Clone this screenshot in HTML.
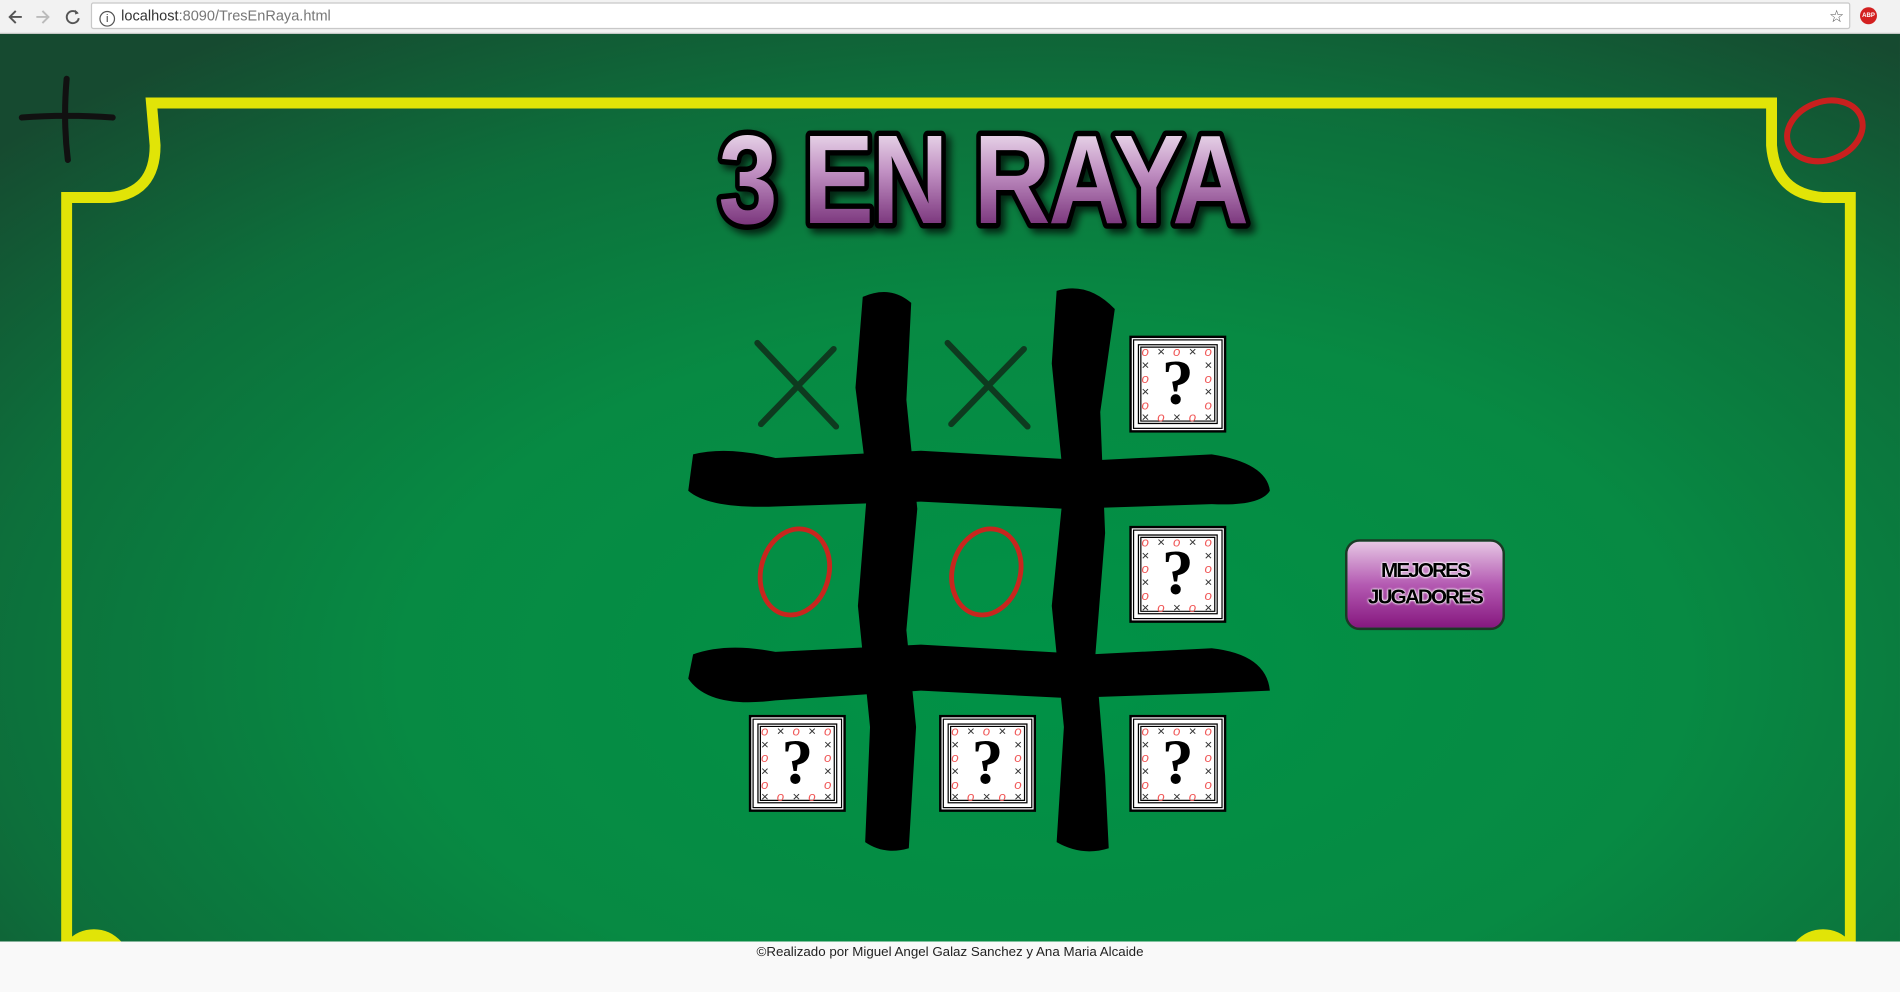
<!DOCTYPE html>
<html><head><meta charset="utf-8">
<style>
html,body{margin:0;padding:0;width:1900px;height:992px;overflow:hidden;background:#f9f9f9;font-family:"Liberation Sans",sans-serif}
#w{position:absolute;left:0;top:0;width:1568px;height:819px;transform:scale(1.21173);transform-origin:0 0}
#bar{position:absolute;left:0;top:0;width:1568px;height:27px;background:#f2f2f2;border-bottom:1px solid #d0d0d0}
#url{position:absolute;left:75px;top:2px;width:1450px;height:20px;background:#fff;border:1px solid #c8c8c8;border-radius:2px;font-size:12px;line-height:20px;color:#333}
#green{position:absolute;left:0;top:28px;width:1568px;height:749px;background:radial-gradient(ellipse 75% 85% at 55% 70%,#009246 0%,#078a43 45%,#0d6f3b 75%,#164a30 100%)}
#foot{position:absolute;left:0;top:777px;width:1568px;height:42px;background:#f9f9f9;font-size:11px;text-align:center;color:#222}
.tile{position:absolute;width:72px;height:72px;background:#fff;border:1px solid #000;box-shadow:0 0 0 1px #fff,0 0 0 3px #000}
.tile .in{position:absolute;left:3px;top:3px;width:64px;height:64px;border:1px solid #000;box-shadow:inset 0 0 0 1px #fff,inset 0 0 0 2px #000}
.tile .q{position:absolute;left:0;top:10px;width:100%;text-align:center;font:bold 52px "Liberation Serif",serif;color:#000;line-height:52px}
.tile span{position:absolute;font-size:11px;line-height:11px}
.o{color:#f05a5a;font-style:italic}.x{color:#333}
#btn{position:absolute;left:1110px;top:445px;width:132px;height:75px;border-radius:12px;background:linear-gradient(#e6c6e4,#b45ab2 50%,#86187f);border:2px solid #1a3a25;box-sizing:border-box;text-align:center;font:bold 17px/22px "Liberation Sans",sans-serif;color:#000;padding-top:13px;letter-spacing:-1.5px;text-shadow:0 0 2px #fff,0 0 2px #fff,0 0 1px #fff}
</style></head><body>
<div id="w">
<div id="bar">
<svg style="position:absolute;left:6px;top:6px" width="62" height="16" viewBox="0 0 62 16"><path d="M12 8H2M7 3L2 8l5 5" stroke="#555" stroke-width="1.6" fill="none"/><path d="M34 8H24M29 3l5 5-5 5" stroke="#bbb" stroke-width="1.6" fill="none"/><path d="M58 5a5 5 0 1 0 1 4" stroke="#555" stroke-width="1.6" fill="none"/><path d="M56 2l3 3-3 1z" fill="#555"/></svg>
<div id="url"><span style="display:inline-block;width:11px;height:11px;border:1px solid #555;border-radius:50%;font-size:9px;line-height:11px;text-align:center;margin:0 5px 0 6px;vertical-align:-1px">i</span>localhost<span style="color:#777">:8090/TresEnRaya.html</span><span style="position:absolute;right:4px;top:0;color:#555;font-size:14px">☆</span></div>
<div style="position:absolute;left:1535px;top:6px;width:14px;height:14px;border-radius:50%;background:#d32020;color:#fff;font-size:5px;line-height:14px;text-align:center;font-weight:bold">ABP</div>
</div>
<div id="green">
<svg width="1568" height="749" style="position:absolute;left:0;top:0">
<g transform="translate(0,-28)">
<path d="M55 777V163H90Q128 160 128 120L125 85H1462L1462 120Q1465 160 1505 163H1527V777" fill="none" stroke="#e1e407" stroke-width="9"/>
<path d="M55 777a30 30 0 0 1 45 0z" fill="#e1e407"/><path d="M1527 777a30 30 0 0 0-45 0z" fill="#e1e407"/>
<path d="M18 97Q55 94 93 97M55 65Q52 100 56 132" stroke="#111" stroke-width="5" fill="none" stroke-linecap="round"/>
<ellipse cx="1506" cy="108" rx="32" ry="24" transform="rotate(-20 1506 108)" fill="none" stroke="#c8201e" stroke-width="5"/>
<g fill="#000">
<path d="M712 245Q735 235 752 250L748 330 757 420 748 520 756 600 750 700Q730 706 714 695L718 600 708 500 716 400 706 320Z"/>
<path d="M872 240Q898 232 920 255L908 340 912 440 904 540 912 640 915 700Q893 707 872 695L878 600 868 500 878 400 868 300Z"/>
<path d="M572 375Q600 368 640 378L760 372 900 380 1000 375Q1045 382 1048 405Q1040 418 1000 416L880 420 760 414 640 418Q585 420 568 405Z"/>
<path d="M572 540Q600 530 640 538L760 532 900 540 1000 535Q1045 540 1048 570L1000 572 880 576 760 570 640 578Q585 585 568 560Z"/>
</g>
<g stroke="#0e3a1f" stroke-width="5" fill="none" stroke-linecap="round">
<path d="M625 283L690 352M688 288L628 350"/><path d="M782 283L848 352M845 288L785 350"/>
</g>
<g stroke="#c8261e" stroke-width="4" fill="none">
<ellipse cx="656" cy="472" rx="28" ry="36" transform="rotate(15 656 472)"/>
<ellipse cx="814" cy="472" rx="28" ry="36" transform="rotate(15 814 472)"/>
</g>
<defs><linearGradient id="tg" x1="0" y1="0" x2="0" y2="1"><stop offset="0" stop-color="#fff"/><stop offset=".45" stop-color="#c08fc2"/><stop offset="1" stop-color="#5a0c5c"/></linearGradient>
<filter id="sh"><feDropShadow dx="4" dy="4" stdDeviation="3" flood-color="#000" flood-opacity=".7"/></filter></defs>
<text x="811" y="184" text-anchor="middle" font-family="Liberation Sans" font-weight="bold" font-size="104" letter-spacing="-2" textLength="436" lengthAdjust="spacingAndGlyphs" fill="url(#tg)" stroke="#000" stroke-width="9" stroke-linejoin="round" paint-order="stroke" filter="url(#sh)">3 EN RAYA</text>
</g>
</svg>
</div>

<div class="tile" style="left:935px;top:280px"><div class="in"></div>
<span class="o" style="left:6px;top:5px">o</span><span class="x" style="left:19px;top:5px">×</span><span class="o" style="left:32px;top:5px">o</span><span class="x" style="left:45px;top:5px">×</span><span class="o" style="left:58px;top:5px">o</span>
<span class="x" style="left:6px;top:16px">×</span><span class="o" style="left:6px;top:27px">o</span><span class="x" style="left:6px;top:38px">×</span><span class="o" style="left:6px;top:49px">o</span>
<span class="x" style="left:58px;top:16px">×</span><span class="o" style="left:58px;top:27px">o</span><span class="x" style="left:58px;top:38px">×</span><span class="o" style="left:58px;top:49px">o</span>
<span class="x" style="left:6px;top:59px">×</span><span class="o" style="left:19px;top:59px">o</span><span class="x" style="left:32px;top:59px">×</span><span class="o" style="left:45px;top:59px">o</span><span class="x" style="left:58px;top:59px">×</span>
<div class="q">?</div></div>

<div class="tile" style="left:935px;top:437px"><div class="in"></div>
<span class="o" style="left:6px;top:5px">o</span><span class="x" style="left:19px;top:5px">×</span><span class="o" style="left:32px;top:5px">o</span><span class="x" style="left:45px;top:5px">×</span><span class="o" style="left:58px;top:5px">o</span>
<span class="x" style="left:6px;top:16px">×</span><span class="o" style="left:6px;top:27px">o</span><span class="x" style="left:6px;top:38px">×</span><span class="o" style="left:6px;top:49px">o</span>
<span class="x" style="left:58px;top:16px">×</span><span class="o" style="left:58px;top:27px">o</span><span class="x" style="left:58px;top:38px">×</span><span class="o" style="left:58px;top:49px">o</span>
<span class="x" style="left:6px;top:59px">×</span><span class="o" style="left:19px;top:59px">o</span><span class="x" style="left:32px;top:59px">×</span><span class="o" style="left:45px;top:59px">o</span><span class="x" style="left:58px;top:59px">×</span>
<div class="q">?</div></div>

<div class="tile" style="left:621px;top:593px"><div class="in"></div>
<span class="o" style="left:6px;top:5px">o</span><span class="x" style="left:19px;top:5px">×</span><span class="o" style="left:32px;top:5px">o</span><span class="x" style="left:45px;top:5px">×</span><span class="o" style="left:58px;top:5px">o</span>
<span class="x" style="left:6px;top:16px">×</span><span class="o" style="left:6px;top:27px">o</span><span class="x" style="left:6px;top:38px">×</span><span class="o" style="left:6px;top:49px">o</span>
<span class="x" style="left:58px;top:16px">×</span><span class="o" style="left:58px;top:27px">o</span><span class="x" style="left:58px;top:38px">×</span><span class="o" style="left:58px;top:49px">o</span>
<span class="x" style="left:6px;top:59px">×</span><span class="o" style="left:19px;top:59px">o</span><span class="x" style="left:32px;top:59px">×</span><span class="o" style="left:45px;top:59px">o</span><span class="x" style="left:58px;top:59px">×</span>
<div class="q">?</div></div>

<div class="tile" style="left:778px;top:593px"><div class="in"></div>
<span class="o" style="left:6px;top:5px">o</span><span class="x" style="left:19px;top:5px">×</span><span class="o" style="left:32px;top:5px">o</span><span class="x" style="left:45px;top:5px">×</span><span class="o" style="left:58px;top:5px">o</span>
<span class="x" style="left:6px;top:16px">×</span><span class="o" style="left:6px;top:27px">o</span><span class="x" style="left:6px;top:38px">×</span><span class="o" style="left:6px;top:49px">o</span>
<span class="x" style="left:58px;top:16px">×</span><span class="o" style="left:58px;top:27px">o</span><span class="x" style="left:58px;top:38px">×</span><span class="o" style="left:58px;top:49px">o</span>
<span class="x" style="left:6px;top:59px">×</span><span class="o" style="left:19px;top:59px">o</span><span class="x" style="left:32px;top:59px">×</span><span class="o" style="left:45px;top:59px">o</span><span class="x" style="left:58px;top:59px">×</span>
<div class="q">?</div></div>

<div class="tile" style="left:935px;top:593px"><div class="in"></div>
<span class="o" style="left:6px;top:5px">o</span><span class="x" style="left:19px;top:5px">×</span><span class="o" style="left:32px;top:5px">o</span><span class="x" style="left:45px;top:5px">×</span><span class="o" style="left:58px;top:5px">o</span>
<span class="x" style="left:6px;top:16px">×</span><span class="o" style="left:6px;top:27px">o</span><span class="x" style="left:6px;top:38px">×</span><span class="o" style="left:6px;top:49px">o</span>
<span class="x" style="left:58px;top:16px">×</span><span class="o" style="left:58px;top:27px">o</span><span class="x" style="left:58px;top:38px">×</span><span class="o" style="left:58px;top:49px">o</span>
<span class="x" style="left:6px;top:59px">×</span><span class="o" style="left:19px;top:59px">o</span><span class="x" style="left:32px;top:59px">×</span><span class="o" style="left:45px;top:59px">o</span><span class="x" style="left:58px;top:59px">×</span>
<div class="q">?</div></div>

<div id="btn">MEJORES<br>JUGADORES</div>

<div id="foot"><div style="padding-top:3px">©Realizado por Miguel Angel Galaz Sanchez y Ana Maria Alcaide</div></div>
</div>
</body></html>
